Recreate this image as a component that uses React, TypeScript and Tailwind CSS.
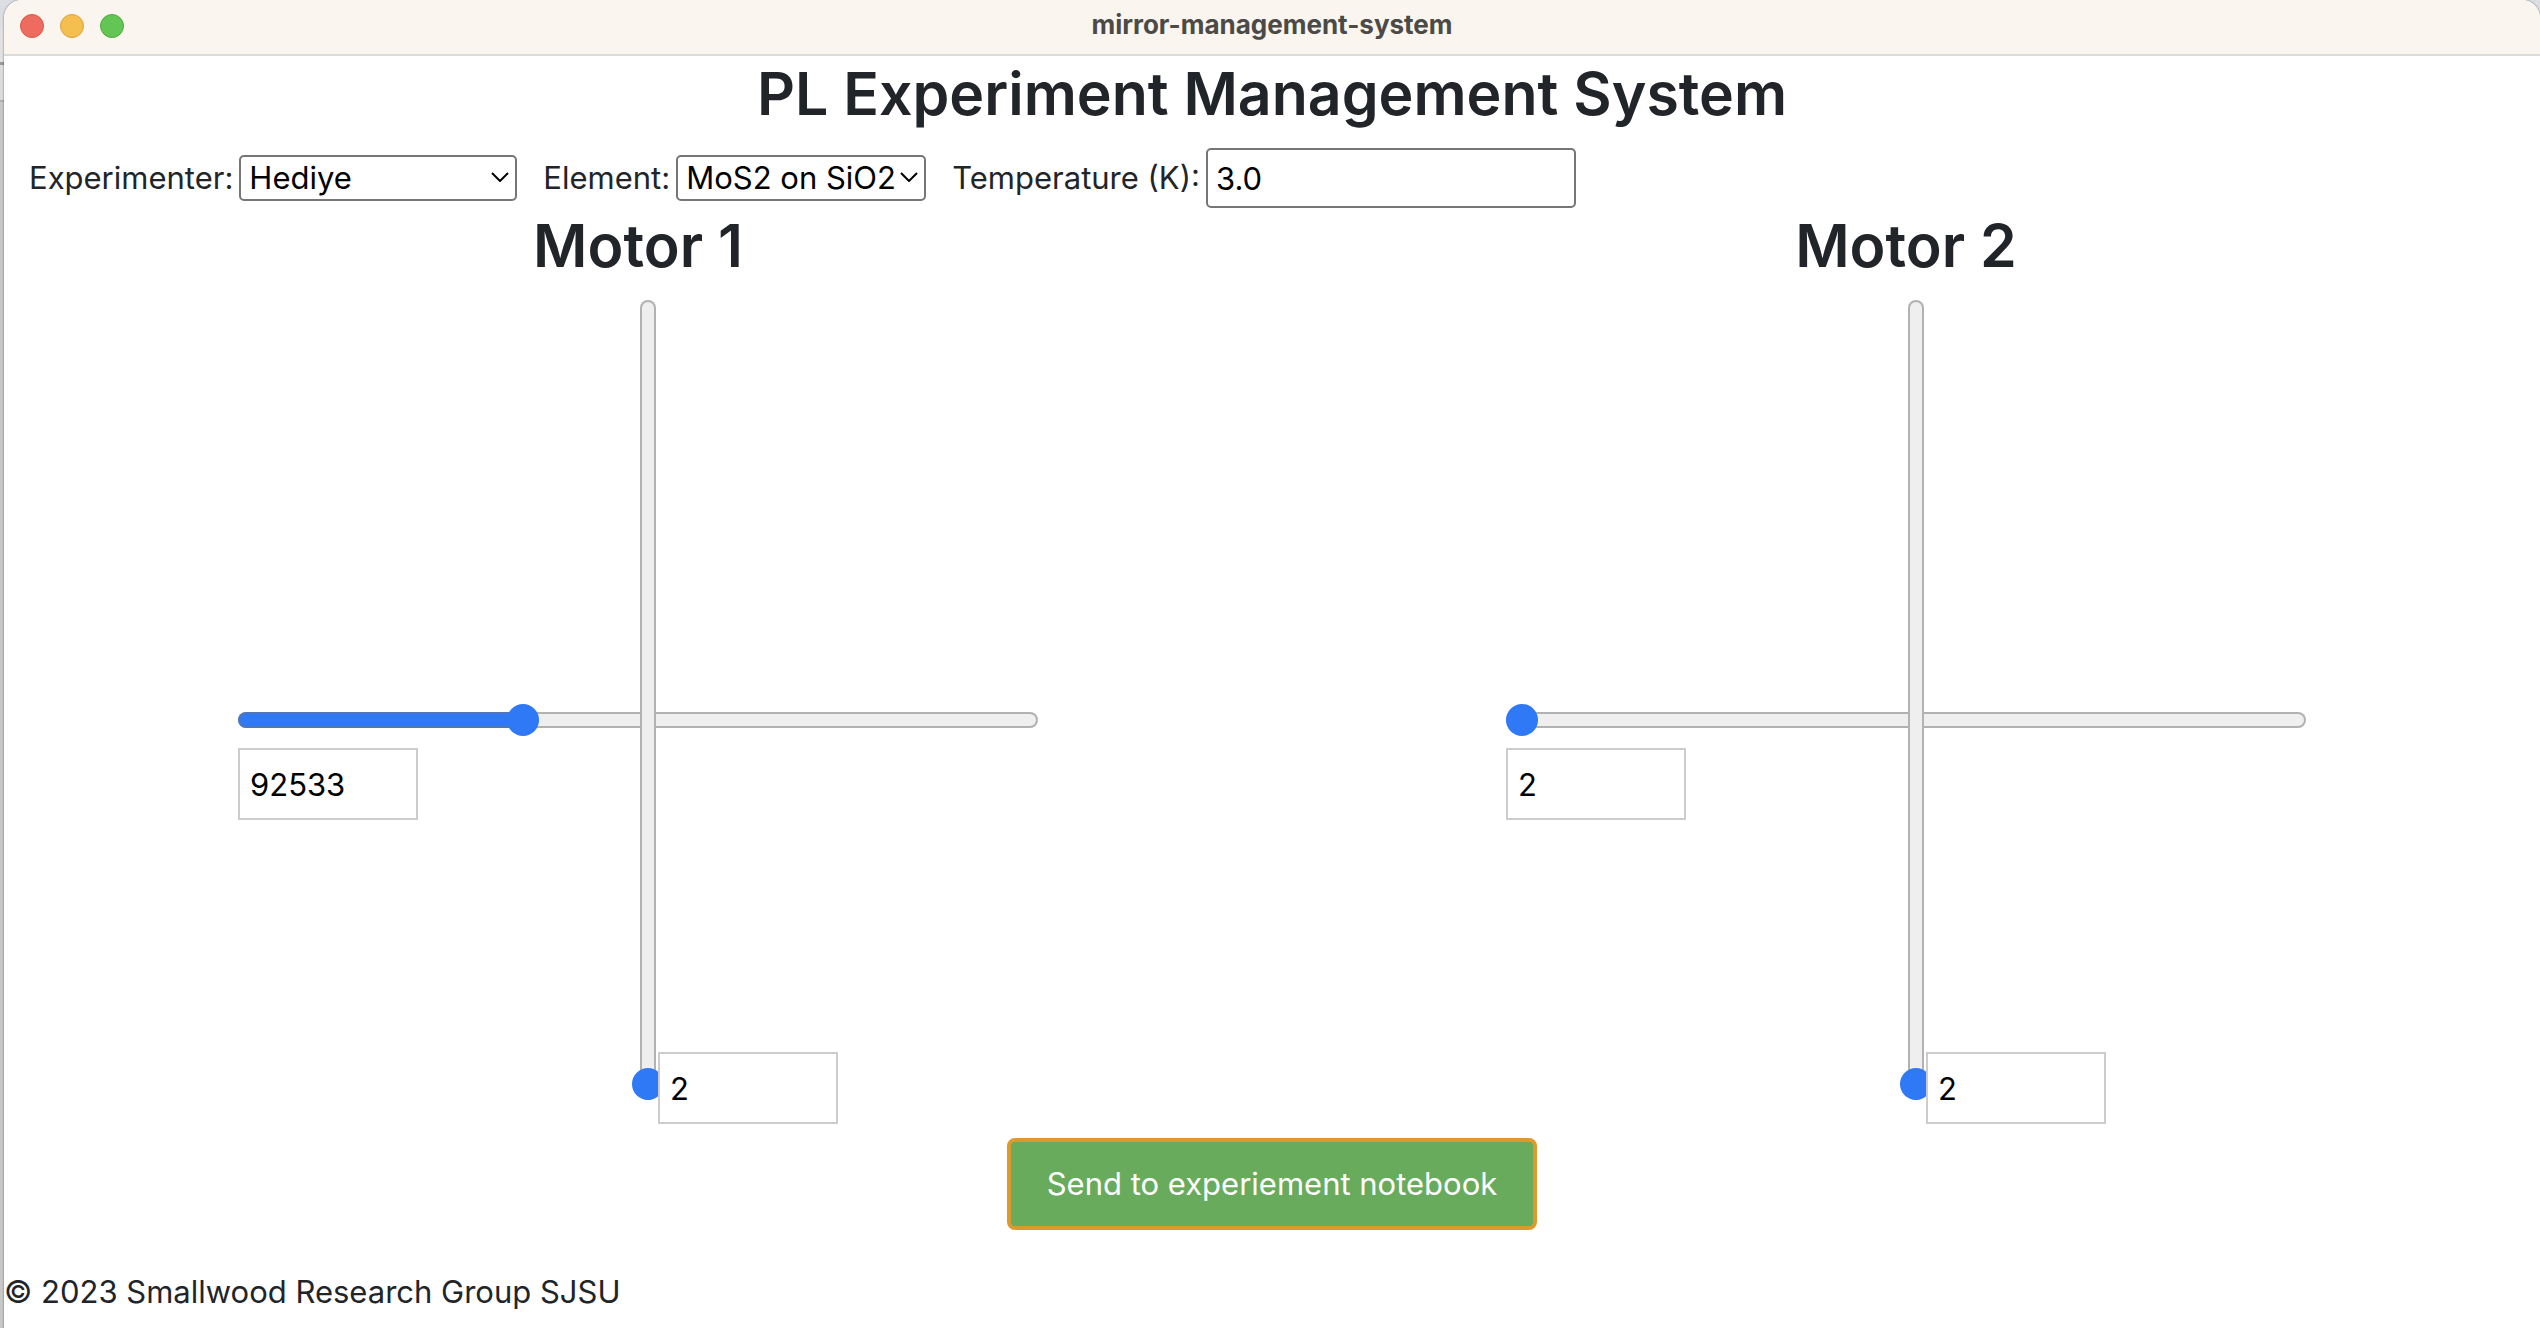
import { useId, useState } from "react";
import type { CSSProperties, ReactNode } from "react";

const MAX_STEPS = 264400;

function TitleBar() {
  return (
    <header className="grid h-14 shrink-0 grid-cols-[1fr_auto_1fr] items-center rounded-t-[18px] border-b-2 border-[#dadcdb] bg-[#faf5ee] px-4">
      <div className="flex gap-4 pb-0.5">
        <button type="button" aria-label="Close" className="size-6 rounded-full border border-[#d9584c] bg-[#ed6b5f]" />
        <button type="button" aria-label="Minimize" className="size-6 rounded-full border border-[#dba23c] bg-[#f5bf4f]" />
        <button type="button" aria-label="Zoom" className="size-6 rounded-full border border-[#52a842] bg-[#62c554]" />
      </div>
      <span className="pb-1 text-[26px] leading-8 font-bold text-[#4b4a47]">mirror-management-system</span>
    </header>
  );
}

function Field({ label, children }: { label: string; children: (id: string) => ReactNode }) {
  const id = useId();
  return (
    <div className="flex items-center gap-1.5">
      <label htmlFor={id}>{label}</label>
      {children(id)}
    </div>
  );
}

function Select({ id, options, width }: { id: string; options: string[]; width: string }) {
  return (
    <div className={`relative ${width}`}>
      <select
        id={id}
        className="h-[46px] w-full appearance-none rounded-[5px] border-2 border-[#767676] bg-white pl-2 leading-10 text-black"
      >
        {options.map((o) => (
          <option key={o}>{o}</option>
        ))}
      </select>
      <svg
        aria-hidden="true"
        viewBox="0 0 18 10"
        className="pointer-events-none absolute top-[18px] right-2 h-[10px] w-[18px]"
        fill="none"
        stroke="black"
        strokeWidth="2"
      >
        <path d="M1 1l8 8 8-8" />
      </svg>
    </div>
  );
}

function StepInput({ label, value, onChange }: { label: string; value: number; onChange: (v: number) => void }) {
  return (
    <input
      type="text"
      inputMode="numeric"
      aria-label={label}
      value={value}
      onChange={(e) => onChange(Number(e.target.value) || 0)}
      className="relative h-[72px] w-[180px] border-2 border-[#ccc] bg-white px-[10px] text-black"
    />
  );
}

function Motor({ name, initialX, initialY }: { name: string; initialX: number; initialY: number }) {
  const [x, setX] = useState(initialX);
  const [y, setY] = useState(initialY);
  const fill = (v: number, dir: string) =>
    ({
      "--track": `linear-gradient(${dir}, #2f78f6 ${(v / MAX_STEPS) * 100}%, #efefef ${(v / MAX_STEPS) * 100}%)`,
    }) as CSSProperties;
  return (
    <section className="flex flex-1 flex-col items-center">
      <h2 className="mb-4 text-[59px] leading-[76px] font-semibold">{name}</h2>
      <div className="grid w-full max-w-[800px]">
        <div className="col-start-1 row-start-1 pt-[404px]">
          <input
            type="range"
            aria-label={`${name} horizontal position`}
            min={0}
            max={MAX_STEPS}
            value={x}
            onChange={(e) => setX(Number(e.target.value))}
            style={fill(x, "to right")}
            className="block h-8 w-full appearance-none bg-transparent [&::-webkit-slider-runnable-track]:h-4 [&::-webkit-slider-runnable-track]:rounded-full [&::-webkit-slider-runnable-track]:bg-(image:--track) [&::-webkit-slider-runnable-track]:shadow-[inset_0_0_0_2px_rgba(118,118,118,0.5)] [&::-webkit-slider-thumb]:-mt-2 [&::-webkit-slider-thumb]:size-8 [&::-webkit-slider-thumb]:appearance-none [&::-webkit-slider-thumb]:rounded-full [&::-webkit-slider-thumb]:bg-[#2f78f6]"
          />
          <div className="mt-3">
            <StepInput label={`${name} horizontal steps`} value={x} onChange={setX} />
          </div>
        </div>
        <div className="pointer-events-none col-start-1 row-start-1 ml-[49%] flex h-[824px] items-end *:pointer-events-auto">
          <input
            type="range"
            aria-label={`${name} vertical position`}
            min={0}
            max={MAX_STEPS}
            value={y}
            onChange={(e) => setY(Number(e.target.value))}
            style={fill(y, "to top")}
            className="mb-6 ml-0.5 block h-[800px] w-8 appearance-none bg-transparent [direction:rtl] [writing-mode:vertical-lr] [&::-webkit-slider-runnable-track]:w-4 [&::-webkit-slider-runnable-track]:rounded-full [&::-webkit-slider-runnable-track]:bg-(image:--track) [&::-webkit-slider-runnable-track]:shadow-[inset_0_0_0_2px_rgba(118,118,118,0.5)] [&::-webkit-slider-thumb]:-ml-2 [&::-webkit-slider-thumb]:size-8 [&::-webkit-slider-thumb]:appearance-none [&::-webkit-slider-thumb]:rounded-full [&::-webkit-slider-thumb]:bg-[#2f78f6]"
          />
          <div className="-ml-1.5 flex">
            <StepInput label={`${name} vertical steps`} value={y} onChange={setY} />
          </div>
        </div>
      </div>
    </section>
  );
}

export default function App() {
  return (
    <div className="min-h-screen bg-[linear-gradient(#dcdee4_0_28px,#e2e2e2_28px_62px,#9a9a9a_62px_65px,#dcdcdc_65px_100px,#b0b0b0_100px_102px,#c8c8c8_102px)] pl-1 font-['Inter',sans-serif] text-[31px] leading-[48px] text-[#212529]">
      <div className="flex min-h-screen flex-col rounded-t-[18px] bg-white shadow-[0_0_2px_rgba(0,0,0,0.6)]">
        <TitleBar />
        <main className="flex flex-col">
          <h1 className="mb-4 text-center text-[59px] leading-[76px] font-semibold">PL Experiment Management System</h1>
          <form className="flex h-[60px] items-center gap-[26px] pl-[25px]">
            <Field label="Experimenter:">
              {(id) => <Select id={id} width="w-[278px]" options={["Hediye"]} />}
            </Field>
            <Field label="Element:">
              {(id) => <Select id={id} width="w-[250px]" options={["MoS2 on SiO2"]} />}
            </Field>
            <Field label="Temperature (K):">
              {(id) => (
                <input
                  id={id}
                  type="text"
                  defaultValue="3.0"
                  className="h-[60px] w-[370px] rounded-[5px] border-2 border-[#767676] bg-white px-2 text-black"
                />
              )}
            </Field>
          </form>
          <div className="flex">
            <Motor name="Motor 1" initialX={92533} initialY={2} />
            <Motor name="Motor 2" initialX={2} initialY={2} />
          </div>
          <button
            type="button"
            className="mt-[14px] h-[92px] self-center rounded-lg border-4 border-[#dc9a2d] bg-[#68ab5c] px-9 text-white"
          >
            Send to experiement notebook
          </button>
        </main>
        <footer className="mt-[38px]">© 2023 Smallwood Research Group SJSU</footer>
      </div>
    </div>
  );
}
